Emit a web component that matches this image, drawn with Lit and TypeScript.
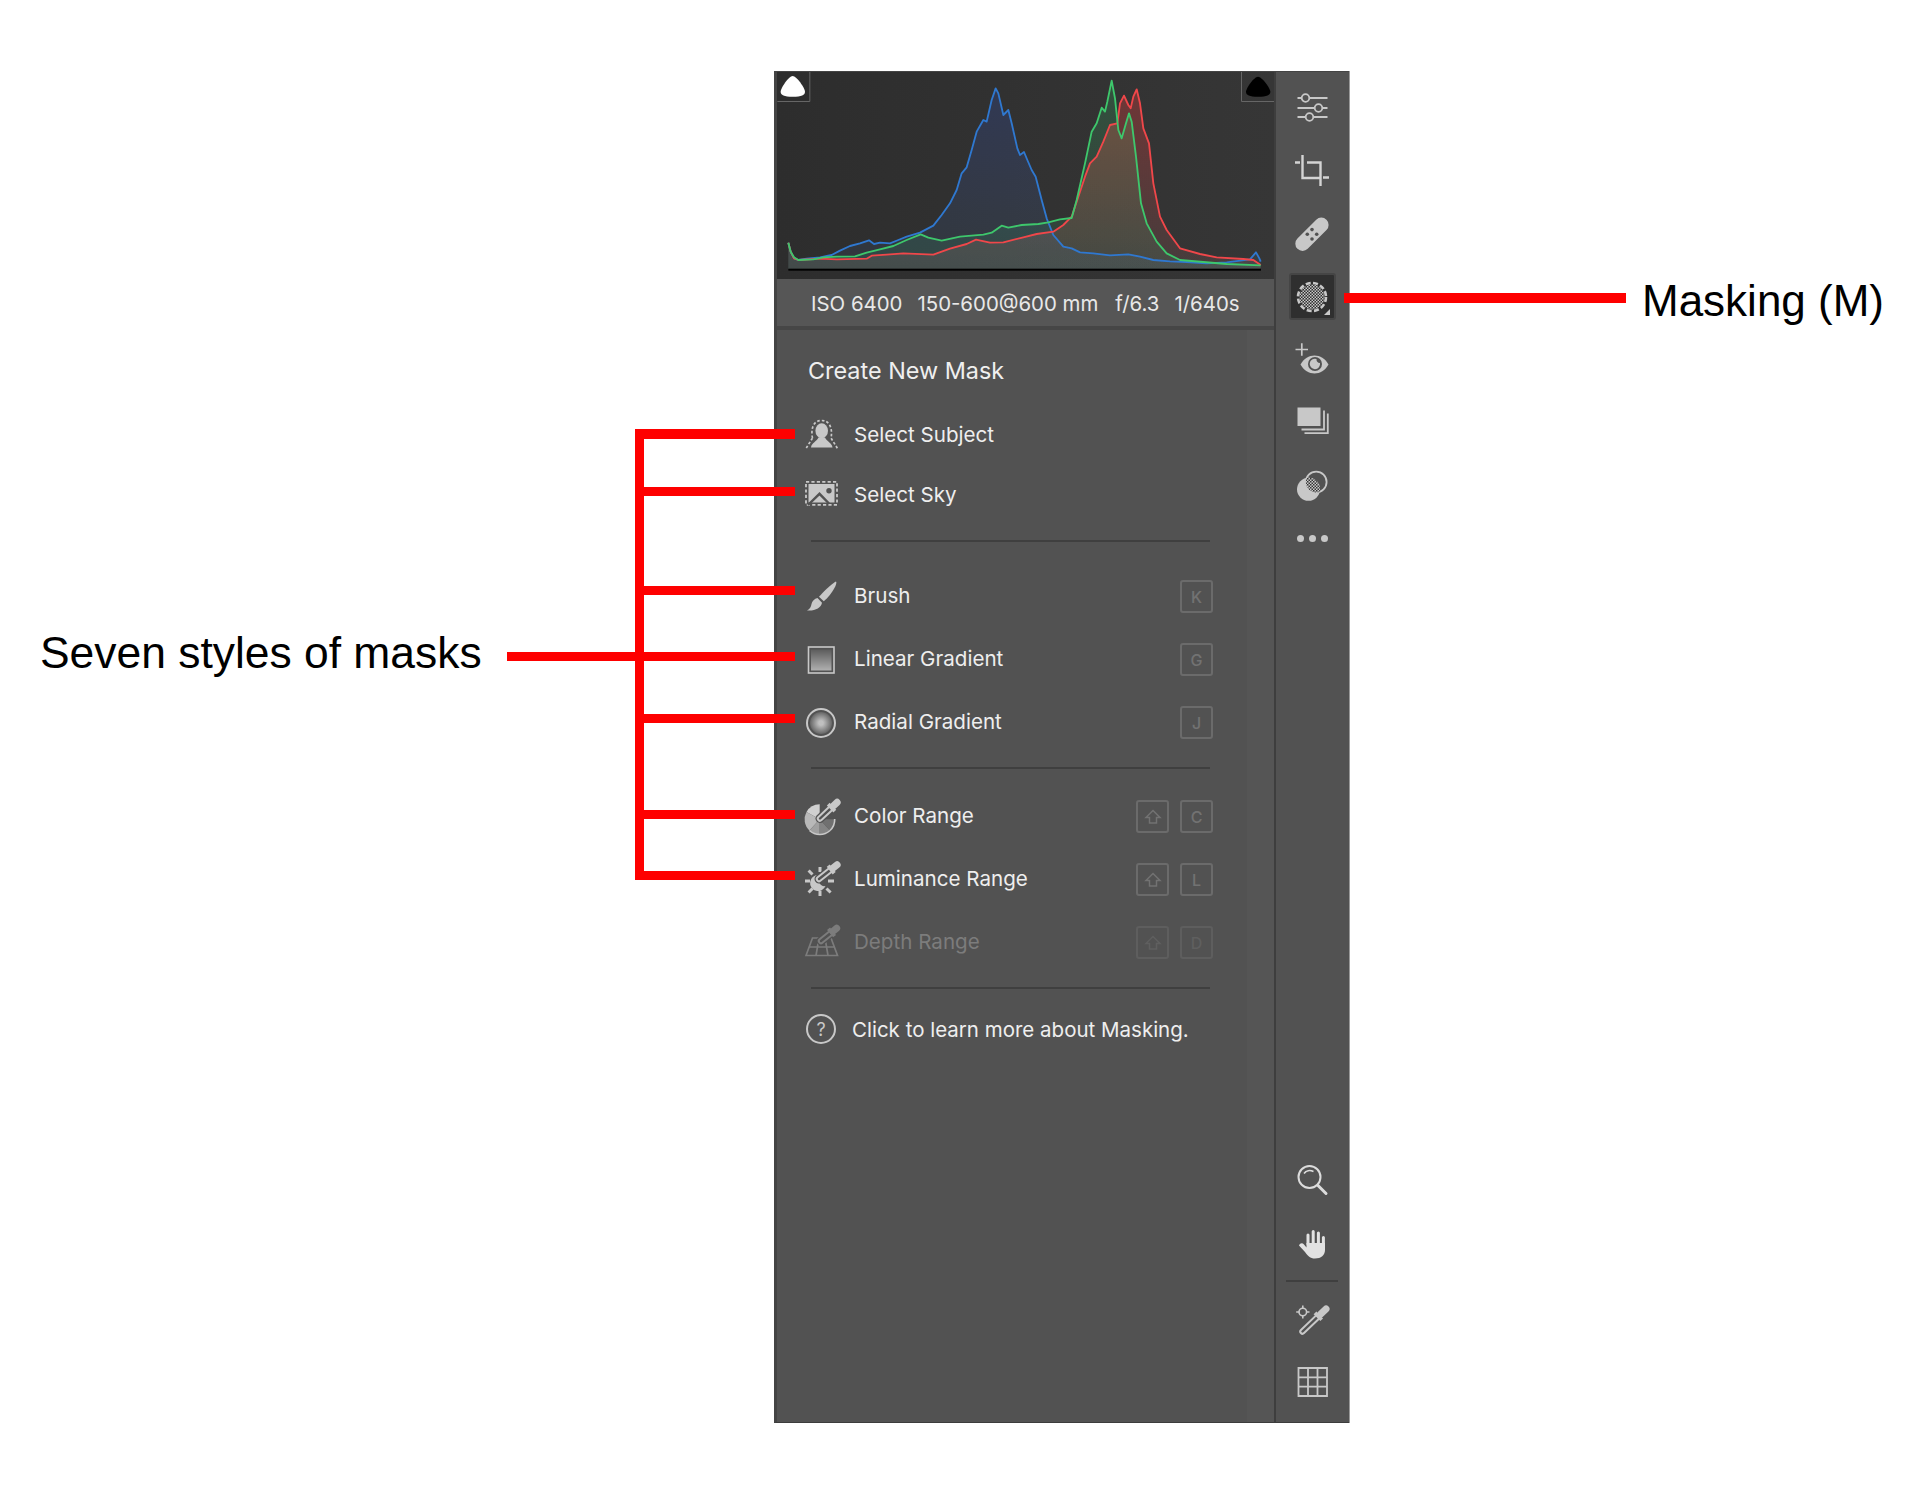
import { LitElement, html, css, svg } from "lit";
import { customElement } from "lit/decorators.js";

const BLUE = [[55,548],[62,575],[72,595],[85,600],[110,596],[150,592],[185,585],[210,572],[240,558],[270,550],[297,541],[312,552],[330,548],[360,550],[385,540],[410,530],[450,518],[490,497],[515,465],[540,430],[560,390],[575,340],[590,322],[605,270],[620,215],[640,180],[650,185],[665,120],[677,85],[685,100],[700,165],[715,150],[725,190],[742,265],[750,285],[762,276],[772,300],[785,330],[797,350],[815,420],[830,475],[850,525],[880,560],[905,565],[930,577],[970,580],[1020,586],[1075,583],[1110,590],[1150,600],[1200,604],[1250,606],[1310,610],[1370,607],[1440,598],[1458,577],[1468,595],[1472,605]];
const GREEN = [[55,548],[62,575],[72,592],[85,600],[130,598],[160,592],[200,590],[255,589],[290,578],[330,568],[370,558],[410,540],[452,523],[475,533],[515,542],[570,530],[640,524],[665,518],[695,497],[715,503],[755,495],[805,492],[835,487],[870,478],[905,474],[920,420],[945,310],[965,215],[980,190],[995,143],[1005,155],[1012,125],[1025,62],[1035,115],[1045,210],[1055,235],[1068,190],[1077,160],[1085,185],[1098,290],[1113,430],[1130,490],[1160,545],[1190,580],[1230,600],[1300,606],[1370,612],[1472,616]];
const RED = [[55,548],[62,575],[72,595],[85,600],[150,596],[200,598],[290,596],[305,587],[350,584],[400,580],[490,584],[540,566],[590,552],[618,539],[660,548],[700,547],[760,532],[800,522],[850,515],[880,495],[905,470],[920,425],[945,350],[960,310],[980,290],[1000,245],[1020,195],[1042,190],[1050,130],[1062,107],[1075,135],[1082,145],[1090,110],[1100,88],[1110,130],[1120,205],[1137,250],[1150,370],[1170,470],[1190,510],[1230,565],[1290,582],[1340,592],[1420,597],[1450,600],[1472,615]];

const line = (p: number[][]) => p.map((q) => q.join(",")).join(" ");
const area = (p: number[][]) => `M55,627 L${line(p).replace(/ /g, " L")} L1472,627 Z`;

const G = "#c8c8c8";
const BG = "#525252";

/* eyedropper: tip end (x1,y1) to bulb end (x2,y2) */
const dropper = (x1: number, y1: number, x2: number, y2: number, c = G, bg = BG) => {
  const dx = x2 - x1, dy = y2 - y1;
  const at = (t: number) => [x1 + dx * t, y1 + dy * t];
  const [sx, sy] = at(0.6), [bx, by] = at(0.76), [ex, ey] = at(0.98);
  const l = Math.hypot(dx, dy), nx = -dy / l, ny = dx / l;
  const [cx, cy] = at(0.66);
  return svg`
    <line x1=${x1} y1=${y1} x2=${sx} y2=${sy} stroke=${bg} stroke-width="9" stroke-linecap="round"/>
    <line x1=${bx} y1=${by} x2=${ex} y2=${ey} stroke=${bg} stroke-width="9.5" stroke-linecap="round"/>
    <line x1=${x1} y1=${y1} x2=${sx} y2=${sy} stroke=${c} stroke-width="6.4" stroke-linecap="round"/>
    <line x1=${x1} y1=${y1} x2=${sx} y2=${sy} stroke=${bg} stroke-width="2.4" stroke-linecap="round"/>
    <line x1=${cx + nx * 4.8} y1=${cy + ny * 4.8} x2=${cx - nx * 4.8} y2=${cy - ny * 4.8} stroke=${c} stroke-width="3.8"/>
    <line x1=${bx} y1=${by} x2=${ex} y2=${ey} stroke=${c} stroke-width="7" stroke-linecap="round"/>`;
};

const icon = (body: unknown) =>
  html`<svg class="ico" width="34" height="34" viewBox="0 0 34 34" fill="none">${body}</svg>`;

const ICONS: Record<string, unknown> = {
  subject: svg`
    <ellipse cx="17.7" cy="12.7" rx="6.3" ry="7.5" fill=${G}/>
    <path d="M7 29.5 C7.5 24.5 13 23.5 14.5 19.5 H21 C22.5 23.5 28 24.5 28.5 29.5 Z" fill=${G}/>
    <path d="M8.5 20 C7 13 8 2.5 17.7 2.5 C27 2.5 28.5 13 27 20 L33.5 30.5 M8.5 20 L2 30.5" stroke=${G} stroke-width="1.7" stroke-dasharray="2.6 2"/>`,
  sky: svg`
    <rect x="2" y="3.8" width="31" height="23" stroke=${G} stroke-width="1.8" stroke-dasharray="3.2 2.2"/>
    <rect x="4.5" y="6" width="26" height="18.5" fill=${G}/>
    <path d="M4 27 L15.5 15.8 L25 25.5" stroke=${BG} stroke-width="2.4"/>
    <circle cx="25" cy="12.7" r="2.7" fill=${BG}/>`,
  brush: svg`
    <path d="M32 1.5 C33.8 3 29 13 19.8 21.3 L15 16.8 C21 10 30 2 32 1.5 Z" fill=${G}/>
    <path d="M13.5 18 L18 22.8 C17 28 11 31.2 3 30.5 C6 29 7 27 7.5 24 C8 21 10.5 18.7 13.5 18 Z" fill=${G}/>`,
  linear: svg`
    <rect x="4.5" y="4" width="25.5" height="26" stroke=${G} stroke-width="1.6"/>
    <rect x="7" y="6.5" width="20.5" height="21" fill="url(#lin)"/>`,
  radial: svg`
    <circle cx="17" cy="17" r="14" stroke=${G} stroke-width="2"/>
    <circle cx="17" cy="17" r="11" fill="url(#rad)"/>`,
  color: svg`
    <path d="M15.7 19.3 V4.3 A15 15 0 0 0 2.5 12 Z" fill="#d0d0d0"/>
    <path d="M15.7 19.3 L2.5 12 A15 15 0 0 0 5.5 30.5 Z" fill="#b8b8b8"/>
    <path d="M15.7 19.3 L5.5 30.5 A15 15 0 0 0 15.7 34.3 Z" fill="#a0a0a0"/>
    <path d="M15.7 19.3 V34.3 A15 15 0 0 0 26 30.5 Z" fill="#848484"/>
    <path d="M15.7 19.3 L26 30.5 A15 15 0 0 0 30.7 19.3 Z" fill="#707070"/>
    <path d="M26 30.5 A15 15 0 0 1 5.5 30.5" stroke=${G} stroke-width="1.6"/>
    <path d="M30.7 19 A15 15 0 0 1 26 30.5" stroke=${G} stroke-width="1.6"/>
    ${dropper(16, 18.5, 33.5, 2)}`,
  lum: svg`
    <path d="M14 12 A8 8 0 1 0 21.5 23 C17 24 13 19 14 12 Z" fill=${G}/>
    <path d="M16 4 V9 M16 28 V33 M1 18 H6 M24 18 H30 M4.6 7.5 L8.5 11.5 M4.6 29.5 L8.5 25.5 M26.6 29.5 L22.5 25.5" stroke=${G} stroke-width="3"/>
    ${dropper(15, 16, 33.5, 1.5)}`,
  depth: svg`
    <path d="M2 29.5 L8.5 12 H27 L33.5 29.5 Z M5 21 H30.5 M15 12 L12 29.5 M21 12 L24 29.5" stroke="#7c7c7c" stroke-width="1.7"/>
    ${dropper(17, 15, 33, 2, "#7c7c7c")}`,
  sliders: svg`
    <path d="M2.5 7 H32.5 M2.5 17 H32.5 M2.5 26 H32.5" stroke=${G} stroke-width="1.8"/>
    <circle cx="10.5" cy="7" r="3.8" fill=${BG} stroke=${G} stroke-width="1.8"/>
    <circle cx="23.5" cy="17" r="3.8" fill=${BG} stroke=${G} stroke-width="1.8"/>
    <circle cx="14.5" cy="26" r="3.8" fill=${BG} stroke=${G} stroke-width="1.8"/>`,
  crop: svg`
    <path d="M0 8.5 H5 M7.5 1 V24 H25 M12 8.5 H25.5 V32 M28 23.5 H34" stroke="#d4d4d4" stroke-width="2.4"/>`,
  bandage: svg`
    <rect x="-3.5" y="10" width="41" height="14.5" rx="7.2" transform="rotate(-45 17 17.3)" fill=${G}/>
    <g fill=${BG}>
      <circle cx="17" cy="12.6" r="1.8"/><circle cx="21.7" cy="17.3" r="1.8"/>
      <circle cx="12.3" cy="17.3" r="1.8"/><circle cx="17" cy="22" r="1.8"/>
    </g>`,
  mask: svg`
    <circle cx="17" cy="17" r="12.5" fill="url(#ck)"/>
    <circle cx="17" cy="17" r="14" stroke=${G} stroke-width="2.6" stroke-dasharray="5 2.4"/>`,
  eye: svg`
    <path d="M0.5 6.5 H13 M6.8 0.2 V12.7" stroke=${G} stroke-width="1.7"/>
    <path d="M5.5 21.5 C12 9.5 27 9.5 33.5 21.5 C27 33.5 12 33.5 5.5 21.5 Z" fill=${G}/>
    <circle cx="20" cy="21" r="7" fill=${BG}/>
    <path d="M21.5 16 A5.2 5.2 0 1 0 25 20 A3.8 3.8 0 0 1 21.5 16 Z" fill=${G}/>`,
  stack: svg`
    <rect x="2.5" y="1.5" width="23" height="18.5" fill=${G}/>
    <path d="M29 4.5 V23.5 H6.5" stroke=${G} stroke-width="1.8"/>
    <path d="M32.8 7.5 V27.2 H9.5" stroke=${G} stroke-width="1.8"/>`,
  circles: svg`
    <clipPath id="lens"><circle cx="13.5" cy="20.3" r="11.5"/></clipPath>
    <circle cx="13.5" cy="20.3" r="11.5" fill=${G}/>
    <circle cx="21.2" cy="13" r="10.4" stroke=${G} stroke-width="1.8"/>
    <g clip-path="url(#lens)">
      <circle cx="21.2" cy="13" r="10.4" fill=${G}/>
      <circle cx="21.2" cy="13" r="10.4" fill="url(#ckd)"/>
    </g>`,
  zoom: svg`
    <circle cx="14.5" cy="13" r="11" stroke="#dcdcdc" stroke-width="2"/>
    <path d="M9 9.5 C11 6.5 15 5.8 18.5 7.5" stroke="#dcdcdc" stroke-width="1.5"/>
    <path d="M23 21.5 L31 29.5" stroke="#dcdcdc" stroke-width="3" stroke-linecap="round"/>`,
  hand: svg`
    <path d="M13 17 V8 M18.2 17 V4.5 M23.4 17 V6 M28.4 19 V10.5" stroke="#e2e2e2" stroke-width="3" stroke-linecap="round"/>
    <path d="M11.5 16 H30 V23 C30 28 26 31.5 20 31.5 C15 31.5 13 29 10 25 L4 18.5 C5 16 7.5 15.6 9 17.5 L11.5 20.5 Z" fill="#e2e2e2"/>`,
  picker: svg`
    <circle cx="7.8" cy="10" r="3.8" stroke=${G} stroke-width="1.6"/>
    <path d="M7.8 3.5 V7 M7.8 13 V16.5 M1.2 10 H4.5 M11 10 H14.5" stroke=${G} stroke-width="1.6"/>
    ${dropper(7.5, 29.5, 31.5, 6.5)}`,
  grid: svg`
    <path d="M3.5 3 H32 V31 H3.5 Z M13 3 V31 M22.5 3 V31 M3.5 12.3 H32 M3.5 21.7 H32" stroke=${G} stroke-width="1.8"/>`,
};

const SHIFT = html`<svg width="18" height="16" viewBox="0 0 18 16" fill="none"><path d="M9 1.5 L16 8.5 H12.5 V14 H5.5 V8.5 H2 Z" stroke="currentColor" stroke-width="1.5"/></svg>`;

interface Row { id: string; label: string; keys?: string[]; off?: boolean }
const S1: Row[] = [
  { id: "subject", label: "Select Subject" },
  { id: "sky", label: "Select Sky" },
];
const S2: Row[] = [
  { id: "brush", label: "Brush", keys: ["K"] },
  { id: "linear", label: "Linear Gradient", keys: ["G"] },
  { id: "radial", label: "Radial Gradient", keys: ["J"] },
];
const S3: Row[] = [
  { id: "color", label: "Color Range", keys: ["+", "C"] },
  { id: "lum", label: "Luminance Range", keys: ["+", "L"] },
  { id: "depth", label: "Depth Range", keys: ["+", "D"], off: true },
];

@customElement("app-root")
export class AppRoot extends LitElement {
  static styles = css`
    :host {
      display: block;
      position: relative;
      height: 1490px;
      box-sizing: border-box;
      padding: 71px 0 0 774px;
      background: #fff;
      font-family: Inter, "Liberation Sans", sans-serif;
      overflow: hidden;
    }
    .panel {
      width: 575px;
      height: 1352px;
      box-sizing: border-box;
      display: flex;
      background: #525252;
      border-left: 3px solid #444;
      border-top: 1px solid #444;
      border-bottom: 1px solid #3c3c3c;
      box-shadow: 1px 0 0 #999;
    }
    .left {
      width: 497px;
      display: flex;
      flex-direction: column;
      flex: none;
    }
    .hist { height: 207px; flex: none; }
    .hist svg { display: block; }
    .info {
      height: 47px;
      flex: none;
      box-sizing: border-box;
      padding-left: 34px;
      padding-top: 2px;
      display: flex;
      align-items: center;
      gap: 15px;
      background: #565656;
      color: #e8e8e8;
      font-size: 20.4px;
    }
    .ap { margin-left: 2px; }
    .strip { height: 4px; flex: none; background: #464646; }
    .lower { flex: 1; display: flex; min-height: 0; }
    .content { flex: 1; padding: 0 34px 0 27px; min-width: 0; }
    .track { width: 27px; flex: none; background: #555; }
    .title {
      height: 75px;
      display: flex;
      align-items: center;
      padding-left: 4px;
      padding-top: 5px;
      box-sizing: border-box;
      color: #efefef;
      font-size: 23.4px;
    }
    .row { display: flex; align-items: center; height: 63px; color: #eee; font-size: 20.6px; }
    .row.s { height: 60px; }
    .row.off { color: #7c7c7c; }
    .ico { display: block; flex: none; overflow: visible; }
    .row .lbl { margin-left: 16px; flex: 1; padding-bottom: 2px; }
    .keys { display: flex; gap: 11px; }
    .key {
      width: 33px;
      height: 33px;
      box-sizing: border-box;
      border: 2px solid #6b6b6b;
      border-radius: 3px;
      display: flex;
      align-items: center;
      justify-content: center;
      color: #727272;
      font-size: 16px;
      font-weight: 500;
    }
    .off .key { border-color: #5e5e5e; color: #5f5f5f; }
    .div { height: 2px; background: #3f3f3f; margin: 0 0 0 7px; width: 399px; }
    .d1 { margin-top: 15px; margin-bottom: 23px; }
    .d2 { margin-top: 13px; margin-bottom: 16px; }
    .d3 { margin-top: 13px; }
    .help { display: flex; align-items: center; height: 80px; color: #eee; font-size: 20.5px; }
    .qm {
      width: 30px;
      height: 30px;
      margin-left: 2px;
      box-sizing: border-box;
      border: 2px solid #c8c8c8;
      border-radius: 50%;
      display: flex;
      align-items: center;
      justify-content: center;
      color: #c8c8c8;
      font-size: 18px;
      flex: none;
    }
    .help .t { margin-left: 16px; }
    .vr { width: 2px; flex: none; background: #3e3e3e; }
    .tools {
      width: 73px;
      flex: none;
      display: flex;
      flex-direction: column;
      align-items: center;
      padding: 4px 1px 9px 0;
      box-sizing: border-box;
    }
    .tool { height: 63px; width: 100%; flex: none; display: flex; align-items: center; justify-content: center; }
    .tool.more { height: 43px; gap: 5px; }
    .dot { width: 7px; height: 7px; border-radius: 50%; background: #c8c8c8; }
    .active {
      width: 47px;
      height: 47px;
      position: relative;
      box-sizing: border-box;
      background: #2f2f2f;
      border: 2px solid #454545;
      border-radius: 3px;
      display: flex;
      align-items: center;
      justify-content: center;
    }
    .corner {
      position: absolute;
      right: 4px;
      bottom: 3px;
      width: 0;
      height: 0;
      border-left: 6px solid transparent;
      border-bottom: 6px solid #c8c8c8;
    }
    .sp { flex: 1; }
    .tdiv { width: 52px; height: 2px; background: #3f3f3f; margin: 5px 0 5px; flex: none; }
    .red { position: absolute; background: #fe0000; }
    .note { position: absolute; color: #000; font-family: "Liberation Sans", Arial, sans-serif; font-size: 44px; line-height: 50px; white-space: nowrap; }
    .note.wide { font-size: 44.4px; }
  `;

  private rows(list: Row[], s = false) {
    return list.map(
      (r) => html`<div class="row ${s ? "s" : ""} ${r.off ? "off" : ""}">
        ${icon(ICONS[r.id])}
        <span class="lbl">${r.label}</span>
        ${r.keys
          ? html`<div class="keys">${r.keys.map((k) => html`<span class="key">${k === "+" ? SHIFT : k}</span>`)}</div>`
          : ""}
      </div>`
    );
  }

  private tool(id: string) {
    return html`<div class="tool">${icon(ICONS[id])}</div>`;
  }

  render() {
    return html`
      <svg width="0" height="0" style="position:absolute">
        <defs>
          <linearGradient id="lin" x1="0" y1="0" x2="0" y2="1">
            <stop offset="0" stop-color="#5c5c5c"/><stop offset="1" stop-color="#b0b0b0"/>
          </linearGradient>
          <radialGradient id="rad">
            <stop offset="0.2" stop-color="#c0c0c0"/><stop offset="1" stop-color="#666"/>
          </radialGradient>
          <pattern id="ck" width="3" height="3" patternUnits="userSpaceOnUse">
            <rect width="1.5" height="1.5" fill="#c8c8c8"/>
            <rect x="1.5" y="1.5" width="1.5" height="1.5" fill="#c8c8c8"/>
          </pattern>
          <pattern id="ckd" width="3" height="3" patternUnits="userSpaceOnUse">
            <rect width="1.5" height="1.5" fill="#333"/>
            <rect x="1.5" y="1.5" width="1.5" height="1.5" fill="#333"/>
          </pattern>
        </defs>
      </svg>
      <div class="panel">
        <div class="left">
          <div class="hist">
            <svg width="497" height="207" viewBox="21 36 1491 621" fill="none">
              <defs>
                <linearGradient id="hbg" x1="0" y1="0" x2="1" y2="0">
                  <stop offset="0" stop-color="#2d2d2d"/><stop offset="1" stop-color="#363636"/>
                </linearGradient>
                <linearGradient id="fr" gradientUnits="userSpaceOnUse" x1="0" y1="100" x2="0" y2="627">
                  <stop offset="0" stop-color="#4a0404"/><stop offset="1" stop-color="#160a0a"/>
                </linearGradient>
                <linearGradient id="fg" gradientUnits="userSpaceOnUse" x1="0" y1="100" x2="0" y2="627">
                  <stop offset="0" stop-color="#00240e"/><stop offset="1" stop-color="#00120a"/>
                </linearGradient>
                <linearGradient id="fb" gradientUnits="userSpaceOnUse" x1="0" y1="100" x2="0" y2="627">
                  <stop offset="0" stop-color="#000a2a"/><stop offset="1" stop-color="#040a10"/>
                </linearGradient>
              </defs>
              <g style="isolation:isolate">
                <rect x="21" y="36" width="1491" height="621" fill="url(#hbg)"/>
                <path d=${area(BLUE)} fill="url(#fb)" style="mix-blend-mode:screen"/>
                <path d=${area(GREEN)} fill="url(#fg)" style="mix-blend-mode:screen"/>
                <path d=${area(RED)} fill="url(#fr)" style="mix-blend-mode:screen"/>
              </g>
              <polyline points=${line(BLUE)} stroke="#2f78d0" stroke-width="5.5" stroke-linejoin="round"/>
              <polyline points=${line(RED)} stroke="#f0474a" stroke-width="5.5" stroke-linejoin="round"/>
              <polyline points=${line(GREEN)} stroke="#3ec76c" stroke-width="5.5" stroke-linejoin="round"/>
              <rect x="55" y="626" width="1418" height="6" fill="#000"/>
              <path d="M22 124.5 H119.5 V36" stroke="#666" stroke-width="3"/>
              <path d="M68 48 C80 48 105 85 105 95 C105 105 95 110 68 110 C42 110 32 105 32 95 C32 85 56 48 68 48 Z" fill="#fff"/>
              <path d="M1512 124.5 H1414.5 V36" stroke="#666" stroke-width="3"/>
              <path d="M1464 50 C1476 50 1501 85 1501 95 C1501 105 1491 110 1464 110 C1438 110 1428 105 1428 95 C1428 85 1452 50 1464 50 Z" fill="#000"/>
            </svg>
          </div>
          <div class="info">
            <span>ISO 6400</span><span>150-600@600 mm</span><span class="ap">f/6.3</span><span>1/640s</span>
          </div>
          <div class="strip"></div>
          <div class="lower">
            <div class="content">
              <div class="title">Create New Mask</div>
              ${this.rows(S1, true)}
              <div class="div d1"></div>
              ${this.rows(S2)}
              <div class="div d2"></div>
              ${this.rows(S3)}
              <div class="div d3"></div>
              <div class="help"><span class="qm">?</span><span class="t">Click to learn more about Masking.</span></div>
            </div>
            <div class="track"></div>
          </div>
        </div>
        <div class="vr"></div>
        <div class="tools">
          ${this.tool("sliders")}
          ${this.tool("crop")}
          ${this.tool("bandage")}
          <div class="tool"><div class="active">${icon(ICONS.mask)}<span class="corner"></span></div></div>
          ${this.tool("eye")}
          ${this.tool("stack")}
          ${this.tool("circles")}
          <div class="tool more"><span class="dot"></span><span class="dot"></span><span class="dot"></span></div>
          <div class="sp"></div>
          ${this.tool("zoom")}
          ${this.tool("hand")}
          <div class="tdiv"></div>
          ${this.tool("picker")}
          ${this.tool("grid")}
        </div>
      </div>

      <div class="red" style="left:635px;top:429px;width:9px;height:450px"></div>
      <div class="red" style="left:635px;top:429px;width:160px;height:10px"></div>
      <div class="red" style="left:635px;top:487px;width:160px;height:9px"></div>
      <div class="red" style="left:635px;top:586px;width:160px;height:9px"></div>
      <div class="red" style="left:507px;top:652px;width:288px;height:9px"></div>
      <div class="red" style="left:635px;top:714px;width:160px;height:9px"></div>
      <div class="red" style="left:635px;top:810px;width:160px;height:9px"></div>
      <div class="red" style="left:635px;top:871px;width:160px;height:9px"></div>
      <div class="red" style="left:1344px;top:293px;width:282px;height:10px"></div>
      <div class="note wide" style="left:40px;top:628px">Seven styles of masks</div>
      <div class="note" style="left:1642px;top:276px">Masking (M)</div>
    `;
  }
}
